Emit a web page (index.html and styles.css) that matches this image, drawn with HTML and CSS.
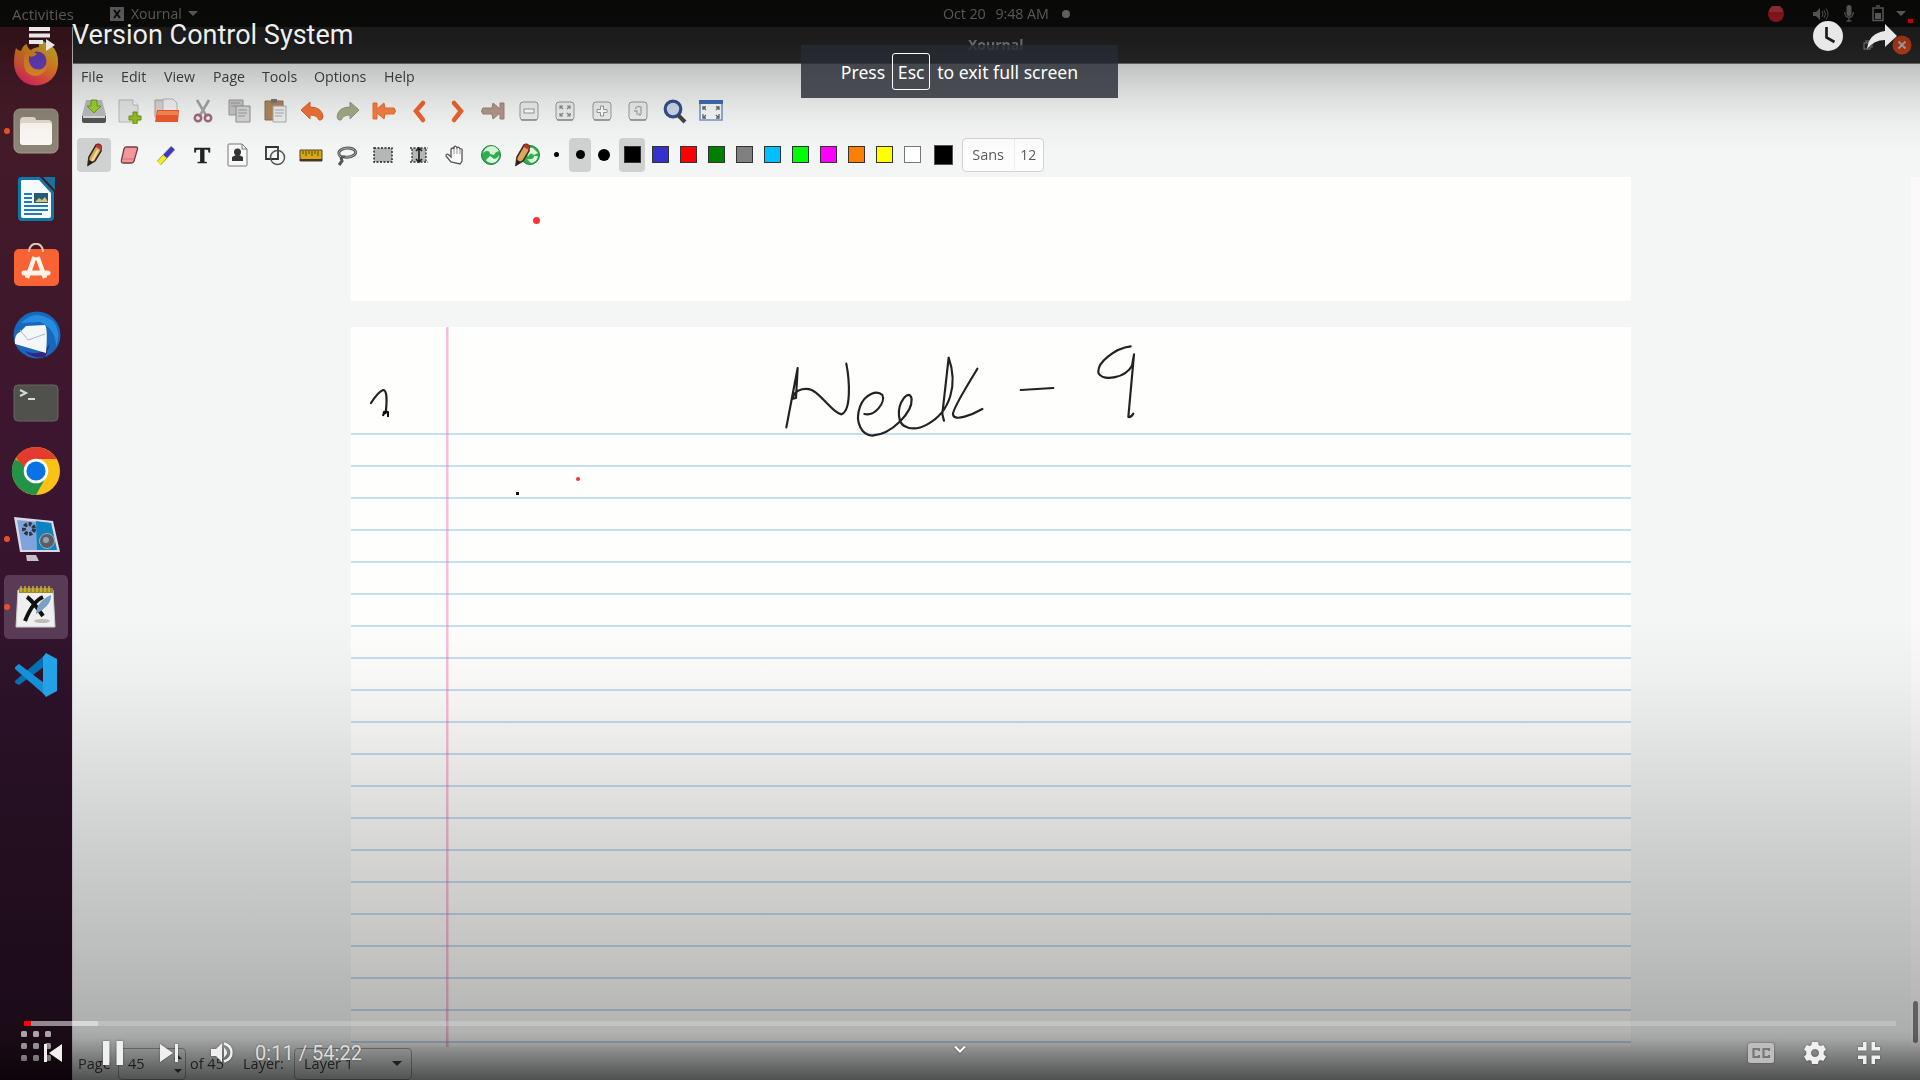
FILE: index.html
```html
<!DOCTYPE html>
<html lang="en">
<head>
<meta charset="utf-8">
<title>Version Control System</title>
<link rel="stylesheet" href="styles.css">
</head>
<body>
<div class="screen">
  <div class="desktop">
    <header class="topbar">
      <span class="activities">Activities</span>
      <span class="appmenu"><svg width="14" height="14" viewBox="0 0 14 14"><rect width="14" height="14" fill="#8c8c8c"/><path d="M4 3l6 8M10 3l-6 8" stroke="#111" stroke-width="2"/></svg>Xournal<i class="caret"></i></span>
      <span class="clock"><span>Oct 20</span><span>9:48 AM</span><i class="bell"></i></span>
      <span class="tray">
        <svg width="16" height="16" viewBox="0 0 16 16"><circle cx="8" cy="8" r="8" fill="#c81f2c"/><path d="M1 6a7 7 0 0 1 14 0z" fill="#d9484c"/></svg>
        <svg class="t-speaker" width="16" height="14" viewBox="0 0 16 14"><path d="M0 5h3l4-4v12l-4-4H0z" fill="#888"/><path d="M9 4q2 3 0 6M11 3q3 4 0 8M13 1.500q4 5.500 0 11" stroke="#777" fill="none"/></svg>
        <svg class="t-mic" width="10" height="17" viewBox="0 0 10 17"><rect x="2.500" width="5" height="11" rx="2.500" fill="#888"/><path d="M.7 7c0 7 8.600 7 8.600 0M5 12v4M2.500 16h5" stroke="#777" fill="none" stroke-width="1.400"/></svg>
        <svg class="t-bat" width="12" height="17" viewBox="0 0 12 17"><path d="M1 3h10v12.500H1zM4 1h4" fill="none" stroke="#888" stroke-width="1.500"/><path d="M3 8h6v6H3z" fill="#888"/></svg>
        <i class="caret"></i>
      </span>
    </header>
    <div class="workspace">
      <nav class="dock">
        <div class="app firefox"><svg width="48" height="48" viewBox="0 0 48 48"><defs><linearGradient id="ff" x1=".8" y1="0" x2=".3" y2="1"><stop offset="0" stop-color="#ffe83c"/><stop offset=".45" stop-color="#ff9123"/><stop offset="1" stop-color="#f0206a"/></linearGradient></defs><path d="M4 8q2 3 5 3 2-6 6-7 0 4 4 6 2-2 8-3-1-5 2-7 6 2 8 8 3-1 2-3 8 7 7 19a22 22 0 0 1-44-1Q2 14 4 8z" fill="url(#ff)"/><circle cx="25" cy="21" r="9.500" fill="#7045d2"/><path d="M13 13q7-4 12 1-4 4-8 2-1 8 4 12 10 5 15-6-1 13-13 14-15-2-10-23z" fill="#ff9a2a"/></svg></div>
        <div class="app running"><svg width="48" height="48" viewBox="0 0 48 48"><rect x="2" y="2" width="44" height="44" rx="6" fill="#8c8576" stroke="#a39c8c"/><path d="M8 14q0-4 4-4h9q3 0 3 3h12q4 0 4 4v17q0 4-4 4H12q-4 0-4-4z" fill="#e4dbd0"/><rect x="8" y="16" width="32" height="22" rx="3" fill="#fbf8f3"/></svg></div>
        <div class="app"><svg width="48" height="48" viewBox="0 0 48 48"><path d="M9 2h19l14 15v25q0 4-4 4H10q-4 0-4-4V5q0-3 3-3z" fill="#1376a6"/><path d="M10 5h17l12 13v23q0 2-2 2H11q-2 0-2-2V6z" fill="#f5fafc"/><path d="M31 2h12v13z" fill="#15759e"/><path d="M12 19h8M12 23h8M12 27h8M12 31h24M12 35h24M12 39h18" stroke="#1f7dac" stroke-width="2"/><path d="M22 18h14v10H22z" fill="#235a78"/><path d="M23 27l4-4 3 2 3-3 3 5z" fill="#d7c27b"/></svg></div>
        <div class="app"><svg width="48" height="48" viewBox="0 2 48 48"><rect x="2" y="8" width="45" height="37" rx="5" fill="#f96334"/><path d="M17 11c0-11 14-11 14 0" fill="none" stroke="#e6c9b4" stroke-width="2"/><path d="M22.500 16L15 37M25.500 16L33 37" stroke="#fff3ea" stroke-width="4.500" fill="none"/><path d="M12 32h24" stroke="#fff3ea" stroke-width="5" stroke-linecap="round"/></svg></div>
        <div class="app"><svg width="50" height="50" viewBox="0 0 50 50"><circle cx="26" cy="25" r="23.500" fill="#1767bb"/><path d="M10 13Q24-2 42 11q9 12 3 26 0-18-16-25z" fill="#268ce0"/><path d="M14 41q15 7 25-7l-5 13q-13 2-20-6z" fill="#372382"/><path d="M15 16l19-1q3 4 1 28L4 34q-1-10 5-12z" fill="#f5f6fa"/><path d="M9 20l8 10 17-6" fill="none" stroke="#aeb5c4"/></svg></div>
        <div class="app"><svg width="48" height="48" viewBox="0 0 48 48"><rect x="2" y="6" width="44" height="36" rx="4" fill="#50504c" stroke="#666660"/><path d="M8 11l6 3-6 3M16 20h7" fill="none" stroke="#dadad5" stroke-width="2"/></svg></div>
        <div class="app"><svg width="50" height="50" viewBox="0 0 50 50"><circle cx="25" cy="25" r="24" fill="#fbc116"/><path d="M4 13A24 24 0 0 0 25 49l10-18-10 5z" fill="#259347"/><path d="M4 13l11 18 10-6z" fill="#259347"/><path d="M5 12l11 12 9-11h21Q37 1 25 1 12 1 5 12z" fill="#e33b2e"/><circle cx="25" cy="25" r="12.300" fill="#fff"/><circle cx="25" cy="25" r="9.600" fill="#0873e4"/></svg></div>
        <div class="app running"><svg width="50" height="50" viewBox="0 0 50 50"><path d="M3 3l39 4 7 31H9z" fill="#d9d9e5"/><path d="M6 6l34 3 6 27H11z" fill="#7fa4dc"/><path d="M25 7l15 2 6 27H26z" fill="#0e83bf"/><circle cx="18" cy="15" r="5" fill="none" stroke="#30343c" stroke-width="4" stroke-dasharray="3 1.500"/><circle cx="36" cy="27" r="7.500" fill="#595f66" stroke="#a8b0b7"/><circle cx="35" cy="26" r="3" fill="#9ba3aa"/><path d="M15 41h10l3 6H16z" fill="#c6bfc5"/></svg></div>
        <div class="app running active"><svg width="46" height="46" viewBox="0 0 46 46"><path d="M5 6h35l2 37H3z" fill="#efeff0" stroke="#ccc"/><path d="M6 4h34v5H6z" fill="#9c8936"/><path d="M8 2v6M12 2v6M16 2v6M20 2v6M24 2v6M28 2v6M32 2v6M36 2v6" stroke="#d6c02c" stroke-width="1.300"/><path d="M14 13q5 3 16 19M30 13Q20 17 12 37" fill="none" stroke="#111" stroke-width="4"/><path d="M38 11q1 10-15 19 0-12 15-19z" fill="#79a1c8"/><ellipse cx="29" cy="37" rx="8" ry="2" fill="#bbb"/></svg></div>
        <div class="app"><svg width="46" height="46" viewBox="0 0 46 46"><path d="M33 2L2 29q-1 2 4 4l29-21z" fill="#0573b6"/><path d="M33 44L2 17q-1-2 4-5l29 22z" fill="#1594dc"/><path d="M33 1l11 6v32l-11 6-3-4V5z" fill="#25a6ed"/></svg></div>
        <svg class="apps-grid" width="30" height="30" viewBox="0 0 30 30"><g fill="#f4eef2"><rect width="6" height="6" rx="1.500"/><rect x="12" width="6" height="6" rx="1.500"/><rect x="24" width="6" height="6" rx="1.500"/><rect y="12" width="6" height="6" rx="1.500"/><rect x="12" y="12" width="6" height="6" rx="1.500"/><rect x="24" y="12" width="6" height="6" rx="1.500"/><rect y="24" width="6" height="6" rx="1.500"/><rect x="12" y="24" width="6" height="6" rx="1.500"/><rect x="24" y="24" width="6" height="6" rx="1.500"/></g></svg>
      </nav>
      <main class="window">
        <div class="titlebar"><span class="wtitle">Xournal</span><svg class="restore" width="10" height="10" viewBox="0 0 10 10"><path d="M1 3h6v6H1zM3 3V1h6v6H7" fill="none" stroke="#888" stroke-width="1.300"/></svg><svg class="close" width="20" height="20" viewBox="0 0 20 20"><circle cx="10" cy="10" r="9.500" fill="#e2491c"/><path d="M6.500 6.500l7 7M13.500 6.500l-7 7" stroke="#ddd" stroke-width="1.800"/></svg></div>
        <div class="menubar"><span>File</span><span>Edit</span><span>View</span><span>Page</span><span>Tools</span><span>Options</span><span>Help</span></div>
        <div class="tools tools-main">
          <svg viewBox="0 0 26 26"><path d="M5 2h16l4 15v7H1v-7z" fill="#bbbdbc"/><path d="M1 18h24v5q0 2-2 2H3q-2 0-2-2z" fill="#555"/><path d="M2 18h22v2H2z" fill="#ddd"/><path d="M10 2h6v6h4l-7 7-7-7h4z" fill="#9bd32c" stroke="#6b9f18"/></svg>
          <svg viewBox="0 0 26 26"><path d="M2 2h14l5 5v17H2z" fill="#e4e6e5" stroke="#babcbb"/><path d="M16 2v5h5" fill="#fff" stroke="#babcbb"/><path d="M16 14h4v4h4v4h-4v4h-4v-4h-4v-4h4z" fill="#96c11c" stroke="#6c9214"/></svg>
          <svg viewBox="0 0 26 26"><path d="M1 2h12v3h8v14H1z" fill="#d8d4cf" stroke="#aaa39d"/><path d="M9 1h10l4 4v9H9z" fill="#f2f2f2" stroke="#bbb"/><path d="M3 12h22l-1 12H1z" fill="#f0592a"/><path d="M4 13h20v4H3z" fill="#f78a56"/></svg>
          <svg viewBox="0 0 26 26"><path d="M7 2l10 17M19 2L9 19" stroke="#a4a5a4" stroke-width="2.600"/><circle cx="8" cy="20" r="3.200" fill="none" stroke="#a3697a" stroke-width="2.500"/><circle cx="18" cy="20" r="3.200" fill="none" stroke="#a3697a" stroke-width="2.500"/></svg>
          <svg viewBox="0 0 26 26"><path d="M3 2h14v15H3z" fill="#c4c5c4" stroke="#989998"/><path d="M10 8h14v16H10z" fill="#d5d6d5" stroke="#8f908f"/><path d="M5 5h9M5 8h5M12 12h9M12 15h9M12 18h7" stroke="#9b9c9b"/></svg>
          <svg viewBox="0 0 26 26"><path d="M3 3h18v19H3z" fill="#b0865c" stroke="#8e6b46"/><path d="M9 1h6v4H9z" fill="#777"/><path d="M11 8h13v16H11z" fill="#ededed" stroke="#aaa"/><path d="M13 12h9M13 15h9M13 18h7" stroke="#aaa"/></svg>
          <svg viewBox="0 0 26 26"><path d="M2 12l9-8v5q12 0 13 10-1 4-4 3-2-5-9-5v4z" fill="#ef7238" stroke="#e05f28"/></svg>
          <svg viewBox="0 0 26 26"><path d="M24 12l-9-8v5Q3 9 2 19q1 4 4 3 2-5 9-5v4z" fill="#a2aa88" stroke="#8f987a"/></svg>
          <svg viewBox="0 0 26 26"><path d="M2 5h4v6l7-6 1 5h9q3 3 0 6h-9l-1 5-7-6v6H2z" fill="#f48045" stroke="#ee6a2c"/></svg>
          <svg viewBox="0 0 26 26"><path d="M16 5l-7 8 7 9" stroke="#ee6330" stroke-width="4.500" fill="none" stroke-linecap="round"/></svg>
          <svg viewBox="0 0 26 26"><path d="M10 5l7 8-7 9" stroke="#ee6330" stroke-width="4.500" fill="none" stroke-linecap="round"/></svg>
          <svg viewBox="0 0 26 26"><path d="M24 5h-4v6l-7-6-1 5H3q-3 3 0 6h9l1 5 7-6v6h4z" fill="#b3978c" stroke="#9e7f73"/></svg>
          <svg viewBox="0 0 26 26"><rect x="4" y="4" width="18" height="18" rx="3" fill="#eceded" stroke="#999"/><path d="M5 22h16" stroke="#777"/><rect x="8" y="11" width="10" height="4" fill="#fff" stroke="#999"/></svg>
          <svg viewBox="0 0 26 26"><rect x="4" y="4" width="18" height="18" rx="3" fill="#eceded" stroke="#999"/><path d="M5 22h16" stroke="#777"/><path d="M8 11V8h3M15 8h3v3M18 15v3h-3M11 18H8v-3M8 8l3 3M18 8l-3 3M8 18l3-3M18 18l-3-3" fill="none" stroke="#888" stroke-width="1.200"/></svg>
          <svg viewBox="0 0 26 26"><rect x="4" y="4" width="18" height="18" rx="3" fill="#eceded" stroke="#999"/><path d="M5 22h16" stroke="#777"/><path d="M11.500 8h3v3.500H18v3h-3.500V18h-3v-3.500H8v-3h3.500z" fill="#fff" stroke="#999"/></svg>
          <svg viewBox="0 0 26 26"><rect x="4" y="4" width="18" height="18" rx="3" fill="#eceded" stroke="#999"/><path d="M5 22h16" stroke="#777"/><path d="M10 11q2-4 6-2v7q-2 3-2-1M9 13h3v4" fill="none" stroke="#aaa" stroke-width="1.300"/></svg>
          <svg viewBox="0 0 26 26"><circle cx="12" cy="11" r="7.800" fill="#ccd8ea" stroke="#334f8e" stroke-width="3.200"/><path d="M17 17l7 7" stroke="#444" stroke-width="4"/></svg>
          <svg viewBox="0 0 26 26"><path d="M2 3h22v19H2z" fill="#f7f8f8" stroke="#7898c8" stroke-width="1.600"/><path d="M1 2h24v4H1z" fill="#3c6fb6"/><path d="M5 12V9h3M5 9l3 3M18 9h3v3M21 9l-3 3M5 16v4h3M5 20l3-3M21 16v4h-3M21 20l-3-3" stroke="#666" stroke-width="1.300" fill="none"/></svg>
        </div>
        <div class="tools tools-pen">
          <div class="modes">
            <span class="pressed"><svg viewBox="0 0 26 26"><path d="M7 23l1-8 7-12q3-2 5 1v5l-6 10z" fill="#d9a85a" stroke="#38301e" stroke-width="1.600"/><path d="M15 3q3-2 5 1v4l-5-3z" fill="#c03434"/><path d="M7 24l1-6 4 2z" fill="#222"/><path d="M17 8l-6 11" stroke="#f3dfa6" stroke-width="2"/></svg></span>
            <svg viewBox="0 0 26 26"><path d="M9 5h10q2 0 1.500 2L17 19q-.5 2-2.500 2H6q-2 0-1.500-3L7 7q.5-2 2-2z" fill="#f3979b" stroke="#733f42" stroke-width="1.300"/><path d="M6 17l11 0" stroke="#d56f76"/></svg>
            <svg viewBox="0 0 26 26"><path d="M20 6L6 21" stroke="#8b8870" stroke-width="5.500"/><path d="M20 6l-8 8.500" stroke="#3d38c8" stroke-width="4.500"/><path d="M12 14.500L6 21" stroke="#f2ee18" stroke-width="4.500"/></svg>
            <span class="texttool">T</span>
            <svg viewBox="0 0 26 26"><path d="M3 3q0-1 1-1h13l5 5v16q0 1-1 1H4q-1 0-1-1z" fill="#f8f8f8" stroke="#777"/><path d="M17 2v5h5" fill="none" stroke="#777"/><circle cx="12.500" cy="10" r="3.500" fill="#333"/><path d="M7 19v-4l4-2h3l4 2v4z" fill="#333"/></svg>
            <svg viewBox="0 0 26 26"><path d="M4 5h12v12H4z" fill="none" stroke="#333" stroke-width="1.800"/><circle cx="15.500" cy="15.500" r="7" fill="none" stroke="#555" stroke-width="1.500"/></svg>
            <svg viewBox="0 0 26 26"><path d="M2 8h22v11H2z" fill="#d9a616" stroke="#53451e"/><path d="M2 18h22" stroke="#433" stroke-width="2"/><path d="M5 9v3M8 9v5M11 9v3M14 9v5M17 9v3M20 9v5" stroke="#53451e"/></svg>
            <svg viewBox="0 0 26 26"><path d="M7 15C0 9 11 4 19 7c7 4-1 9-8 8q-5-1-3 4l-3 4" fill="none" stroke="#555" stroke-width="3"/><path d="M7 15C0 9 11 4 19 7c7 4-1 9-8 8" fill="none" stroke="#bbb" stroke-width=".9"/></svg>
            <svg viewBox="0 0 26 26"><path d="M4 6h18v14H4z" fill="#b5b7b6" stroke="#222" stroke-width="1.400" stroke-dasharray="2 1.500"/></svg>
            <svg viewBox="0 0 26 26"><path d="M6 6h14v14H6z" fill="#b5b7b6"/><path d="M4 6h18M4 20h18M6 7v12M20 7v12" stroke="#333" stroke-width="1.300" stroke-dasharray="2 1.500"/><path d="M13 6v14M10 9l3-3 3 3M10 17l3 3 3-3" fill="none" stroke="#222" stroke-width="1.700"/></svg>
            <svg viewBox="0 0 26 26"><path d="M9 20l-5-6q0-3 3-1l2 2V7q2-2 3 0V5q2-2 3 1 2-2 3 1 3-1 2 3v9l-2 3z" fill="#fafafa" stroke="#555" stroke-width="1.300"/><path d="M12 7v5M15 7v5M18 8v4" stroke="#999"/></svg>
            <svg viewBox="0 0 26 26"><circle cx="13" cy="13" r="9.500" fill="#2fae4e" stroke="#23833a"/><path d="M5 12q1-7 8-8 5 0 8 5-4 1-5 4l-4-1q0-3-3-3-3 0-4 3z" fill="#d6f3d7"/><path d="M8 18l4-4 4 3q3 0 5-4 0 7-7 8-4 0-6-3z" fill="#e6f8e6"/></svg>
            <svg viewBox="0 0 26 26"><circle cx="16" cy="13" r="9.500" fill="#2fae4e" stroke="#23833a"/><path d="M12 10q2-5 7-4l5 5-4 2q-4-4-6 2zM24 14q-1 6-7 7l-4-4q7 1 7-3z" fill="#e1f7e2"/><path d="M2 23l1-8L10 3q3-2 5 1v5L9 19z" fill="#d9a85a" stroke="#4a2c22" stroke-width="1.600"/><path d="M10 3q3-2 5 1v4l-5-3z" fill="#b33"/><path d="M2 24l1-6 4 2z" fill="#222"/></svg>
          </div>
          <div class="sizes"><span><i class="dot s"></i></span><span class="pressed"><i class="dot m"></i></span><span><i class="dot l"></i></span></div>
          <div class="palette"><span class="pressed"><i class="c-black"></i></span><span><i class="c-blue"></i></span><span><i class="c-red"></i></span><span><i class="c-green"></i></span><span><i class="c-gray"></i></span><span><i class="c-sky"></i></span><span><i class="c-lime"></i></span><span><i class="c-pink"></i></span><span><i class="c-orange"></i></span><span><i class="c-yellow"></i></span><span><i class="c-white"></i></span></div>
          <i class="current"></i>
          <div class="fontbox"><span>Sans</span><b>12</b></div>
        </div>
        <div class="canvas">
          <div class="pages">
            <section class="page blank"></section>
            <section class="page ruled"></section>
          </div>
          <div class="scroll"><i></i></div>
          <svg class="ink title-ink" width="440" height="140" viewBox="0 0 1320 420"><g fill="none" stroke="#222" stroke-width="6.500" stroke-linecap="round" stroke-linejoin="round"><path d="M139 322L173 144l-5 90-9 2C162 206 205 196 230 220c30 24 50 58 74 63 30-10 25-100 15-152"/><path d="M373 282c32 8 65-36 54-57-15-15-52-5-67 35-18 50 8 85 37 87 60-5 120-70 118-110-8-35-42 12-38 50 2 44 50 46 85 26 70-38 92-120 64-200L607 282l5 20"/><path d="M712 146c-20 35-75 120-73 137 3 24 60 0 88-16M842 210l98-6M1172 79c-45 5-105 50-96 82 18 24 80 12 100-24l6-34-17 188q8 2 15-10"/></g></svg>
          <svg class="ink mark-ink" width="24" height="34" viewBox="0 0 24 34"><path d="M3 19Q10 8 15 6q5 0 3 20" fill="none" stroke="#222" stroke-width="2.200" stroke-linecap="round"/><path d="M15 32l1-4 2-1 2 1v5M16 30l3-2" fill="none" stroke="#111" stroke-width="2"/></svg>
          <i class="ink speck"></i>
        </div>
        <footer class="status"><span class="s-page">Page</span><span class="spin">45<span class="arrows"><i class="up"></i><i class="caret"></i></span></span><span class="s-of">of 45</span><span class="s-layer">Layer:</span><span class="combo">Layer 1<i class="caret"></i></span></footer>
      </main>
    </div>
  </div>

  <div class="shade"></div>
  <i class="pointer p1"></i><i class="pointer p2"></i><i class="rec"></i>

  <div class="player-top">
    <svg width="28" height="26" viewBox="0 0 28 26"><path d="M1 1h21v4H1zM1 7.500h21v4H1zM1 14h14v4H1zM18 13l9 6-9 6z" fill="#e8e8e8"/></svg>
    <h1>Version Control System</h1>
    <svg class="later" width="30" height="30" viewBox="0 0 30 30"><circle cx="15" cy="15" r="15" fill="#e8e8e8"/><path d="M13.500 6v10.500l8 4.500" fill="none" stroke="#1c1c1c" stroke-width="2.700"/></svg>
    <svg class="share" width="30" height="25" viewBox="0 0 30 25"><path d="M18 0l12 12-12 11v-7Q7 16 0 25 2 9 18 7z" fill="#e8e8e8"/></svg>
  </div>

  <div class="toast"><span>Press</span><kbd>Esc</kbd><span>to exit full screen</span></div>

  <div class="player-bottom">
    <div class="progress"><i class="loaded"></i><i class="played"></i></div>
    <div class="controls">
      <svg class="prev" width="18" height="18" viewBox="0 0 18 18"><path d="M0 0h3v18H0zM18 0v18L5 9z"/></svg>
      <svg class="pause" width="20" height="24" viewBox="0 0 20 24"><path d="M0 0h6.500v24H0zM13.500 0H20v24h-6.500z"/></svg>
      <svg class="next" width="18" height="18" viewBox="0 0 18 18"><path d="M15 0h3v18h-3zM0 0l13 9-13 9z"/></svg>
      <svg class="vol" width="22" height="21" viewBox="0 0 22 21"><path d="M0 7h5l6-6v19l-6-6H0zM13 5.500q6 5 0 10z"/><path d="M13 1.500c10 3 10 15 0 18" fill="none" stroke="#f0f0f0" stroke-width="2.400"/></svg>
      <span class="time">0:11 / 54:22</span>
      <svg class="more" width="12" height="8" viewBox="0 0 12 8"><path d="M1 1.500l5 5 5-5" fill="none" stroke="#fff" stroke-width="2"/></svg>
      <svg class="cc" width="26" height="20" viewBox="0 0 26 20"><rect width="26" height="20" rx="2.500" fill="#bdbdbd"/><path d="M11 8V6H5.500v8H11v-2M21 8V6h-5.500v8H21v-2" fill="none" stroke="#777" stroke-width="2.200"/></svg>
      <svg class="gear" width="22" height="22" viewBox="0 0 22 22"><path fill-rule="evenodd" d="M8 0h6l.6 3 1.800 1 2.900-1L22 7.600l-2.300 2v2.800l2.300 2L19.300 19l-2.900-1-1.800 1-.6 3H8l-.6-3-1.800-1-2.900 1L0 14.400l2.300-2V9.600L0 7.600 2.700 3l2.900 1 1.800-1zM11 7a4 4 0 1 0 .01 0z"/></svg>
      <svg class="fs" width="22" height="22" viewBox="0 0 22 22"><path d="M5 0h3.500v8.500H0V5h5zM13.500 0H17v5h5v3.500h-8.500zM0 13.500h8.500V22H5v-5H0zM13.500 13.500H22V17h-5v5h-3.500z"/></svg>
    </div>
  </div>
</div>
</body>
</html>
```
FILE: styles.css
```css
* { box-sizing: border-box; }
body { margin: 0; background: #0b0b0a; overflow: hidden; }
svg { display: block; flex: none; }
i { font-style: normal; display: block; flex: none; }

.screen { position: relative; width: 1920px; height: 1080px; overflow: hidden; }
.desktop {
  display: flex; flex-direction: column; height: 1080px;
  font: 14px/18px "Open Sans", "Noto Sans", sans-serif; color: #3d3d3d;
  filter: blur(.5px);
}
.caret { width: 0; height: 0; border: 5px solid transparent; border-top-color: currentColor; border-bottom: 0; }

/* desktop top bar */
.topbar { flex: none; height: 27px; background: #0f0f0d; color: #8c8c8a; display: grid; grid-template-columns: 110px 833px 830px 1fr; align-items: center; }
.activities { padding-left: 12px; font-size: 15px; }
.appmenu { display: flex; align-items: center; gap: 7px; }
.appmenu .caret { margin-left: -1px; }
.clock { display: flex; align-items: center; font-size: 14.300px; letter-spacing: -.1px; }
.clock span + span { margin-left: 10px; }
.bell { width: 8px; height: 8px; border-radius: 50%; background: #999; margin-left: 13px; }
.tray { display: flex; align-items: center; margin-left: -5px; }
.t-speaker { margin-left: 29px; }
.t-mic { margin-left: 15px; }
.t-bat { margin-left: 18px; }
.tray .caret { margin-left: 12px; }

/* dock */
.workspace { flex: 1; display: flex; min-height: 0; }
.dock { width: 72px; padding-top: 2px; background: linear-gradient(#4b1b26, #421a28 12%, #3b1530 45%, #2c1229 65%, #260f20); display: flex; flex-direction: column; }
.app { position: relative; height: 68px; flex: none; display: flex; align-items: center; justify-content: center; }
.app.active { height: 64px; margin: 2px 4px; border-radius: 5px; background: #5a3b56; }
.firefox { padding-top: 2px; }
.running::before { content: ""; position: absolute; left: 4px; top: 31px; width: 6px; height: 6px; border-radius: 50%; background: #e95125; }
.active.running::before { left: 0; top: 29px; }
.apps-grid { margin: auto 0 19px 21px; }

/* window */
.window { flex: 1; display: flex; flex-direction: column; background: #f4f6f6; min-width: 0; border-left: 1px solid #e2dfe1; }
.titlebar { flex: none; height: 37px; background: linear-gradient(#292929, #2c2c2c); border-bottom: 1px solid #777; display: grid; grid-template-columns: 1790px 29px 20px; align-items: center; }
.wtitle { font-weight: 700; color: #9a9a9a; margin-left: 895px; font-size: 14px; }
.menubar { flex: none; height: 26px; padding: 0 0 1px 8px; display: grid; grid-template-columns: 40px 43px 49px 49px 52px 70px 60px; align-items: center; font-size: 14.200px; font-weight: 500; color: #444; }
.tools { flex: none; display: flex; align-items: center; }
.tools-main { height: 42px; padding-left: 8px; gap: 10.280px; }
.tools svg { width: 26px; height: 26px; }
.tools-pen { height: 45px; padding-left: 3px; }
.modes { display: grid; grid-template-columns: repeat(13, 36.100px); align-items: center; justify-items: center; }
.pressed { background: #d0d1d1; border-radius: 4px; display: flex; align-items: center; justify-content: center; height: 34px; }
.modes .pressed { width: 34px; }
.texttool { font: 700 24px/26px "Liberation Serif", serif; color: #222; -webkit-text-stroke: .7px #222; }
.sizes { display: grid; grid-template-columns: 25px 22px 25px; margin-left: -1px; align-items: center; }
.sizes span { display: flex; align-items: center; justify-content: center; height: 34px; }
.dot { border-radius: 50%; background: #000; }
.dot.s { width: 5px; height: 5px; }
.dot.m { width: 9px; height: 9px; }
.dot.l { width: 12px; height: 12px; }
.palette { display: flex; align-items: center; margin-left: 3px; }
.palette span { width: 28px; height: 34px; display: flex; align-items: center; justify-content: center; }
.palette .pressed { width: 26px; margin-right: 1px; }
.palette i { width: 17px; height: 17px; border: 1.500px solid #333; }
.c-black { background: #000; }
.c-blue { background: #3333cc; }
.c-red { background: #f00; }
.c-green { background: #008000; }
.c-gray { background: #808080; }
.c-sky { background: #00c0ff; }
.c-lime { background: #0f0; }
.c-pink { background: #f0f; }
.c-orange { background: #ff8000; }
.c-yellow { background: #ff0; }
.palette .c-white { background: #fff; border-color: #777; }
.current { width: 19px; height: 20px; background: #000; border: 1px solid #555; margin-left: 8px; }
.fontbox { width: 82px; height: 34px; margin-left: 9px; background: #fdfdfd; border: 1px solid #d3d3d3; border-radius: 4px; display: flex; align-items: center; color: #5a5a5a; padding-left: 9px; font-size: 14.500px; }
.fontbox span { width: 43px; border-right: 1px solid #eee; line-height: 31px; }
.fontbox b { font-weight: 500; padding-left: 5px; font-size: 14px; }

/* drawing area */
.canvas { position: relative; flex: 1; min-height: 0; display: flex; justify-content: space-between; overflow: hidden; }
.pages { width: 1280px; margin-left: 278px; display: flex; flex-direction: column; gap: 26px; }
.page { background: #fefefd; flex: none; box-shadow: 0 0 3px #f8f3f5; }
.blank { height: 124px; }
.ruled {
  height: 720px;
  background:
    linear-gradient(#eb5fa366, #eb5fa366) 94.500px 0 / 2.500px 100% no-repeat,
    repeating-linear-gradient(#c6dcf2 0 2px, transparent 2px 32px) 0 106px / 100% 640px no-repeat,
    #fefefd;
}
.scroll { width: 9px; background: #fcf9fa; display: flex; flex-direction: column; justify-content: flex-end; align-items: center; padding-bottom: 4px; }
.scroll i { width: 5px; height: 42px; border-radius: 3px; background: #858585; }
.ink { position: absolute; }
.title-ink { left: 667px; top: 143px; }
.mark-ink { left: 295px; top: 207px; }
.speck { left: 443px; top: 315px; width: 3px; height: 3px; background: #111; }

/* status bar */
.status { flex: none; height: 33px; display: flex; align-items: center; font-size: 14.500px; color: #444; }
.s-page { width: 45px; padding-left: 5px; }
.spin, .combo { height: 32px; border: 1px solid #aaa; border-radius: 4px; display: flex; align-items: center; justify-content: space-between; padding: 0 9px; }
.spin { width: 68px; padding-right: 3px; }
.arrows { display: flex; flex-direction: column; gap: 10px; }
.arrows .caret { border-width: 4px; border-bottom: 0; }
.up { width: 0; height: 0; border: 4px solid transparent; border-bottom-color: #444; border-top: 0; }
.s-of { width: 57px; padding-left: 4px; }
.s-layer { width: 51px; }
.combo { width: 118px; }

/* darkening behind the player controls */
.shade {
  position: absolute; inset: 0;
  background:
    linear-gradient(#0006, #0005 40px, #00000036 64px, #00000023 84px, #00000010 108px, #00000005 130px, transparent 155px),
    linear-gradient(transparent 620px, #00000007 680px, #00000015 750px, #00000027 840px, #0000003c 960px, #0000004b 1030px, #00000053 1038px, #00000080 1058px, #000000ac 1080px);
}
.pointer { position: absolute; border-radius: 50%; background: #f33; }
.p1 { left: 533px; top: 217px; width: 7px; height: 7px; }
.p2 { left: 576px; top: 477px; width: 4px; height: 4px; }
.rec { position: absolute; left: 1908px; top: 19px; width: 5px; height: 4px; background: #c40000; }

/* player */
.player-top { position: absolute; left: 28px; right: 23px; top: 18px; height: 36px; display: flex; align-items: flex-start; }
.player-top > svg:first-child { margin-top: 8px; }
h1 { margin: 0 auto 0 16px; font: 400 27px/34px Roboto, sans-serif; color: #eee; text-shadow: 0 0 2px #0008; white-space: nowrap; }
.later { margin-top: 3px; }
.share { margin: 6px 0 0 24px; }
.toast { position: absolute; left: 801px; top: 45px; width: 317px; height: 53px; background: #272b32d0; display: flex; align-items: center; justify-content: center; gap: 7px; color: #fff; font: 17.600px/24px "Noto Sans", sans-serif; white-space: nowrap; }
kbd { width: 38px; height: 37px; border: 1px solid #fff; border-radius: 3px; display: flex; align-items: center; justify-content: center; font: inherit; }
.player-bottom { position: absolute; left: 24px; right: 24px; top: 1021px; height: 59px; fill: #f0f0f0; }
.progress { height: 5px; background: #fff3; display: grid; }
.progress i { grid-area: 1 / 1; height: 5px; }
.loaded { width: 74px; background: #fff6; }
.played { width: 7px; background: #f00; }
.controls { height: 54px; display: flex; align-items: center; padding: 0 16px 1px 20px; }
.controls svg { filter: drop-shadow(0 0 1px #0006); }
.pause { margin-left: 41px; }
.next { margin-left: 37px; }
.vol { margin-left: 33px; }
.time { width: 110px; margin-left: 22px; font: 20.100px/24px Roboto, sans-serif; color: #ddd; white-space: nowrap; text-shadow: 0 0 2px #0006; }
.more { margin: -8px auto 0 589px; }
.cc { margin-right: 30px; }
.gear { margin-right: 32px; }
```
